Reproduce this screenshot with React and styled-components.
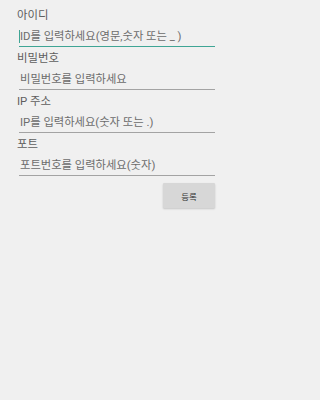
import React from "react";
import styled, { createGlobalStyle } from "styled-components";

const GlobalStyle = createGlobalStyle`
  html, body {
    margin: 0;
    padding: 0;
    background: #f0f0f0;
  }
  body {
    font-family: Roboto, "Noto Sans CJK KR", sans-serif;
  }
`;

const Screen = styled.div`
  width: 235px;
  height: 400px;
  box-sizing: border-box;
  padding: 8px 20px 0 17px;
  display: flex;
  flex-direction: column;
  gap: 4px;
  background: #f0f0f0;
`;

const Field = styled.div`
  display: flex;
  flex-direction: column;
`;

const Label = styled.label`
  font-size: 11.4px;
  line-height: 14px;
  color: #5e5e5e;
`;

const InputWrap = styled.div`
  position: relative;
  margin-left: 2px;
  height: 25px;
  box-sizing: border-box;
  border-bottom: ${(p) => (p.focused ? "1.5px solid #3fa595" : "1px solid #a3a3a3")};

  &::before {
    content: "";
    display: ${(p) => (p.focused ? "block" : "none")};
    position: absolute;
    left: 0;
    top: 8px;
    width: 1px;
    height: 13px;
    background: #3fa595;
  }
`;

const Input = styled.input`
  width: 100%;
  height: 100%;
  box-sizing: border-box;
  border: none;
  outline: none;
  background: transparent;
  padding: 5px 0 1px 1px;
  font-family: Roboto, "Noto Sans CJK KR", sans-serif;
  font-size: 11.3px;
  line-height: 18px;
  color: #333;

  &::placeholder {
    color: #6c6c6c;
  }
`;

const Actions = styled.div`
  display: flex;
  justify-content: flex-end;
  margin-top: 3px;
`;

const Button = styled.button`
  width: 52px;
  height: 25px;
  border: none;
  border-radius: 1px;
  background: #d7d7d7;
  box-shadow: 0 1px 2px rgba(0, 0, 0, 0.18);
  font-family: Roboto, "Noto Sans CJK KR", sans-serif;
  font-size: 8.5px;
  color: #333;
  padding: 0;
`;

const fields = [
  { label: "아이디", placeholder: "ID를 입력하세요(영문,숫자 또는 _ )", focused: true },
  { label: "비밀번호", placeholder: "비밀번호를 입력하세요" },
  { label: "IP 주소", placeholder: "IP를 입력하세요(숫자 또는 .)" },
  { label: "포트", placeholder: "포트번호를 입력하세요(숫자)" },
];

export default function App() {
  return (
    <>
      <GlobalStyle />
      <Screen>
        {fields.map((f) => (
          <Field key={f.label}>
            <Label>{f.label}</Label>
            <InputWrap focused={f.focused}>
              <Input placeholder={f.placeholder} />
            </InputWrap>
          </Field>
        ))}
        <Actions>
          <Button>등록</Button>
        </Actions>
      </Screen>
    </>
  );
}
